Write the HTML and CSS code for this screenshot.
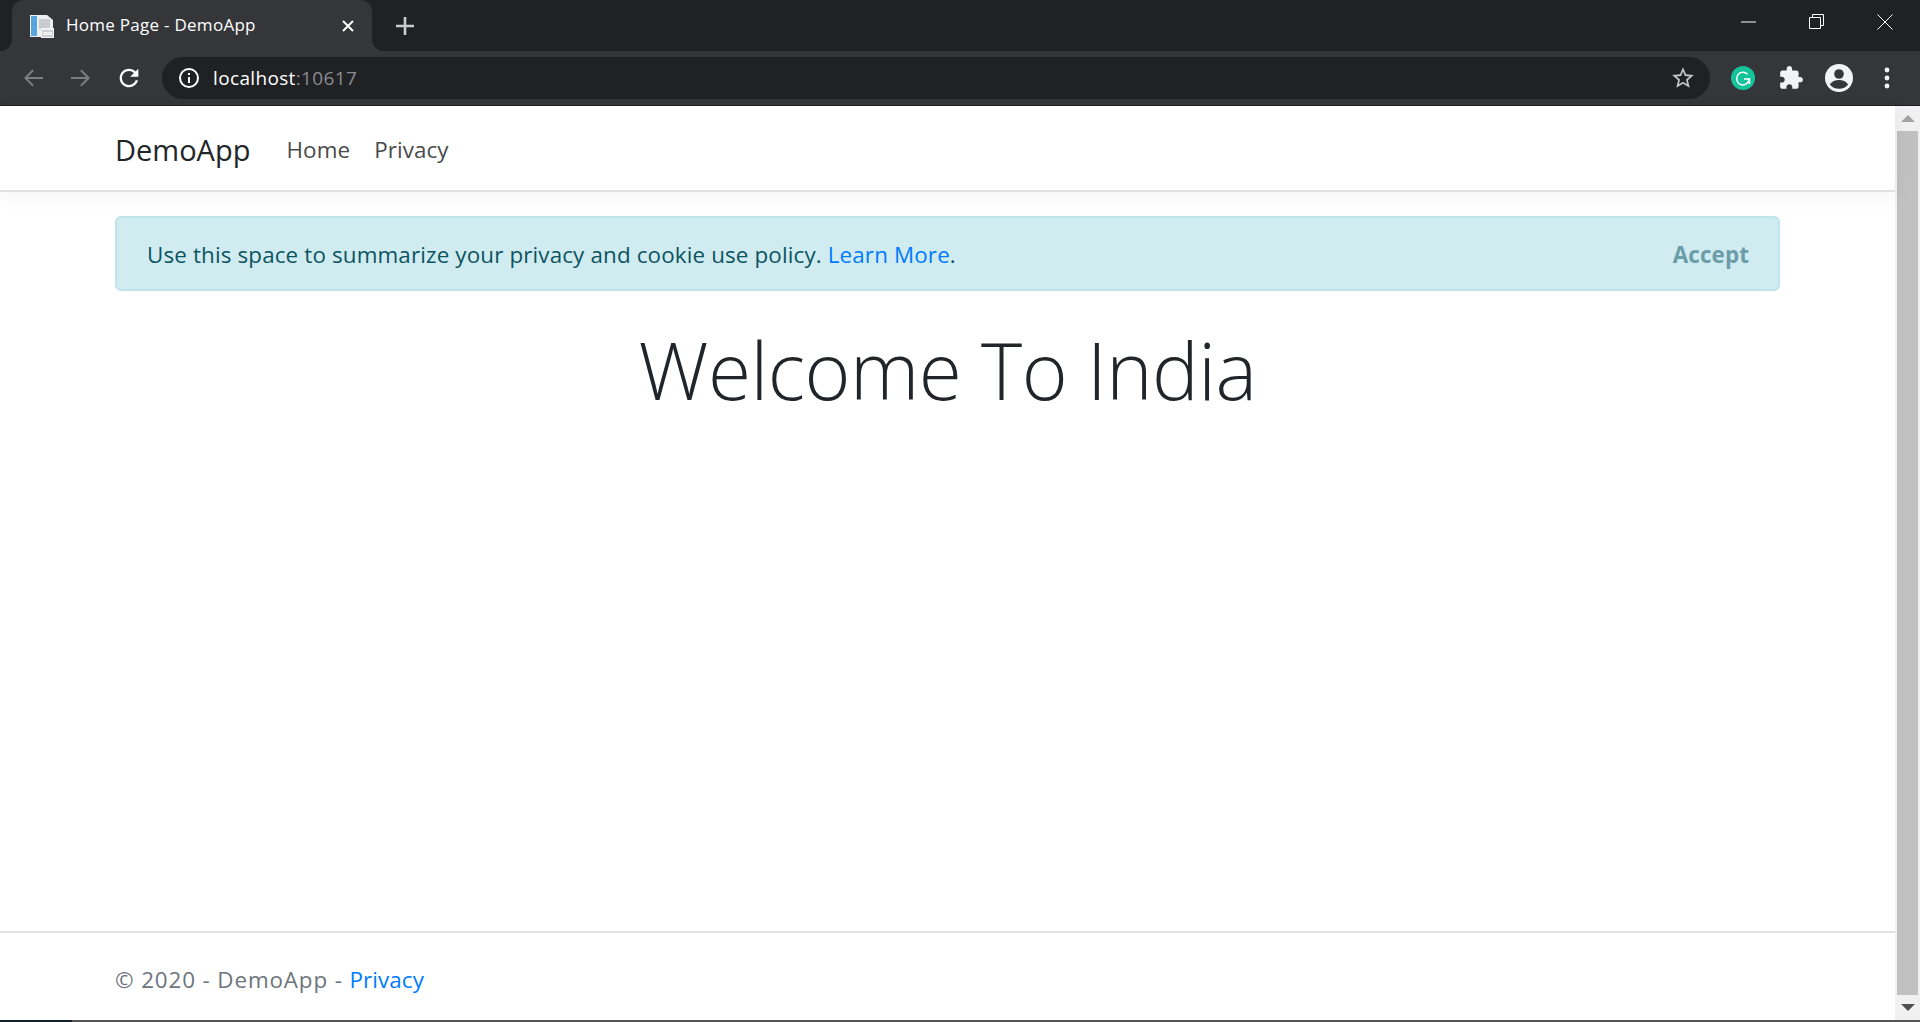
FILE: index.html
```html
<!DOCTYPE html>
<html lang="en">
<head>
<meta charset="utf-8">
<title>Home Page - DemoApp</title>
<link rel="stylesheet" href="styles.css">
</head>
<body>
<div class="browser">
  <div class="tabstrip">
    <div class="strip-left"></div>
    <div class="tab">
      <svg class="favicon" width="24" height="24" viewBox="0 0 24 24">
        <path d="M0 1h17l6 5v17H0z" fill="#eceef0"/>
        <rect x="1" y="2" width="6" height="20" fill="#5aa5de"/>
        <rect x="9" y="5" width="11" height="10" fill="#c8ccd0"/>
        <rect x="11" y="14" width="13" height="10" fill="#f2f3f4"/>
        <rect x="12" y="16" width="11" height="7" fill="#ccd1d6"/>
        <rect x="13" y="18" width="9" height="3" fill="#eef0f2"/>
      </svg>
      <span class="tab-title">Home Page - DemoApp</span>
      <svg class="tab-close" width="12" height="12" viewBox="0 0 12 12"><path d="M1 1l10 10M11 1L1 11" stroke="#fff" stroke-width="2"/></svg>
    </div>
    <div class="strip-right">
      <svg class="new-tab" width="18" height="18" viewBox="0 0 18 18"><path d="M9 0v18M0 9h18" stroke="#c9ccd1" stroke-width="2.6"/></svg>
      <div class="win-controls">
        <div class="win-btn"><svg width="16" height="16" viewBox="0 0 16 16"><path d="M0 8h15" stroke="#fff" stroke-width="1"/></svg></div>
        <div class="win-btn"><svg width="16" height="16" viewBox="0 0 16 16"><path d="M3.5 3.5V.5h11v11h-3M.5 3.5h11v11H.5z" fill="none" stroke="#fff"/></svg></div>
        <div class="win-btn"><svg width="16" height="16" viewBox="0 0 16 16"><path d="M.5.5l15 15M15.500.5l-15 15" stroke="#fff" fill="none"/></svg></div>
      </div>
    </div>
  </div>
  <div class="toolbar">
    <div class="tool-btn"><svg width="24" height="24" viewBox="0 0 24 24"><path fill="#7d7e82" d="M22 11H6.800l6-6L11.400 3.600 3 12l8.400 8.400 1.400-1.400-6-6H22z"/></svg></div>
    <div class="tool-btn"><svg width="24" height="24" viewBox="0 0 24 24"><path fill="#7d7e82" d="M2 11h15.200l-6-6 1.400-1.400L21 12l-8.400 8.400-1.400-1.400 6-6H2z"/></svg></div>
    <div class="tool-btn"><svg width="28" height="28" viewBox="0 0 24 24"><path fill="#fff" d="M17.650 6.350C16.200 4.900 14.210 4 12 4c-4.420 0-7.990 3.580-7.990 8s3.570 8 7.990 8c3.730 0 6.840-2.550 7.730-6h-2.080c-.82 2.330-3.040 4-5.650 4-3.310 0-6-2.690-6-6s2.690-6 6-6c1.660 0 3.140.69 4.220 1.780L13 11h7V4l-2.350 2.350z"/></svg></div>
    <div class="omnibox">
      <svg class="info" width="22" height="22" viewBox="0 0 22 22"><circle cx="11" cy="11" r="9" fill="none" stroke="#fff" stroke-width="2"/><rect x="10" y="10" width="2" height="6" fill="#fff"/><rect x="10" y="6" width="2" height="2" fill="#fff"/></svg>
      <span class="url"><span class="url-host">localhost</span>:10617</span>
      <svg class="star" width="26" height="26" viewBox="0 0 24 24"><path fill="#c4c5c7" d="M22 9.240l-7.190-.62L12 2 9.190 8.630 2 9.240l5.460 4.730L5.820 21 12 17.270 18.180 21l-1.630-7.030L22 9.240zM12 15.400l-3.760 2.270 1-4.280-3.320-2.880 4.380-.38L12 6.100l1.710 4.040 4.380.38-3.320 2.880 1 4.280L12 15.400z"/></svg>
    </div>
    <div class="tool-group">
      <div class="tool-btn"><svg width="24" height="24" viewBox="0 0 24 24"><circle cx="12" cy="12" r="12" fill="#15c39a"/><path d="M16.500 8.200A6.300 6.300 0 1 0 18.300 12.800" fill="none" stroke="#fff" stroke-width="1.500"/><path d="M13 13h5.500v5" fill="none" stroke="#fff" stroke-width="1.500"/></svg></div>
      <div class="tool-btn"><svg width="26" height="26" viewBox="0 0 24 24"><path fill="#f1f3f4" d="M20.500 11H19V7c0-1.100-.9-2-2-2h-4V3.500C13 2.120 11.880 1 10.500 1S8 2.120 8 3.500V5H4c-1.100 0-1.990.9-1.990 2v3.800H3.500c1.490 0 2.700 1.210 2.700 2.700s-1.210 2.700-2.700 2.700H2V20c0 1.100.9 2 2 2h3.800v-1.500c0-1.490 1.210-2.700 2.700-2.700 1.490 0 2.700 1.210 2.700 2.700V22H17c1.100 0 2-.9 2-2v-4h1.500c1.380 0 2.500-1.120 2.500-2.500S21.880 11 20.500 11z"/></svg></div>
      <div class="tool-btn"><svg width="28" height="28" viewBox="0 0 28 28"><circle cx="14" cy="14" r="14" fill="#f1f3f4"/><circle cx="14" cy="10" r="4.800" fill="#35363a"/><path d="M4.800 20.500c2-3.200 5.500-4.500 9.200-4.500s7.200 1.300 9.200 4.500c-2 2.800-5.400 4.300-9.200 4.300s-7.200-1.500-9.200-4.300z" fill="#35363a"/></svg></div>
      <div class="tool-btn"><svg width="6" height="22" viewBox="0 0 6 22"><circle cx="3" cy="3" r="2.400" fill="#f1f3f4"/><circle cx="3" cy="11" r="2.400" fill="#f1f3f4"/><circle cx="3" cy="19" r="2.400" fill="#f1f3f4"/></svg></div>
    </div>
  </div>
  <div class="viewport">
    <div class="page">
      <header class="navbar">
        <a class="brand">DemoApp</a>
        <nav class="nav-links"><a class="nav-link">Home</a><a class="nav-link">Privacy</a></nav>
      </header>
      <main class="content">
        <div class="alert">
          <span class="alert-text">Use this space to summarize your privacy and cookie use policy. <a class="link">Learn More</a>.</span>
          <button class="accept">Accept</button>
        </div>
        <h1 class="welcome">Welcome To India</h1>
      </main>
      <footer class="footer">© 2020 - DemoApp - <a class="link footer-link">Privacy</a></footer>
    </div>
    <div class="scrollbar">
      <div class="scroll-btn"><svg width="14" height="7" viewBox="0 0 14 7"><path d="M7 0l7 7H0z" fill="#a3a3a3"/></svg></div>
      <div class="scroll-thumb"></div>
      <div class="scroll-btn"><svg width="14" height="7" viewBox="0 0 14 7"><path d="M7 7l7-7H0z" fill="#505050"/></svg></div>
    </div>
  </div>
  <div class="taskbar"><div class="taskbar-start"></div></div>
</div>
</body>
</html>
```

FILE: styles.css
```css
* { box-sizing: border-box; }
html, body { margin: 0; height: 100%; overflow: hidden; }
body { font-family: "Open Sans", "Noto Sans", "Liberation Sans", sans-serif; background: #fff; }
.browser { display: flex; flex-direction: column; height: 1022px; }

.tabstrip { display: flex; height: 51px; background: linear-gradient(#202124 50%, #35363a 50%); }
.strip-left { width: 12px; background: #202124; border-bottom-right-radius: 12px; }
.tab { width: 360px; background: #35363a; border-radius: 12px 12px 0 0; display: flex; align-items: center; padding: 0 18px 2px; }
.favicon { margin-right: 12px; margin-top: 2px; }
.tab-title { color: #fff; font-size: 17px; flex: 1; letter-spacing: 0.27px; white-space: nowrap; }
.tab-close { flex: none; margin-top: 2px; }
.strip-right { flex: 1; background: #202124; border-bottom-left-radius: 12px; display: flex; align-items: center; padding-left: 24px; }
.new-tab { margin-top: 0; }
.win-controls { margin-left: auto; display: flex; padding-right: 1px; margin-top: -8px; }
.win-btn { width: 68px; height: 30px; display: flex; align-items: center; justify-content: center; }

.toolbar { display: flex; align-items: center; height: 54px; background: #35363a; padding: 0 9px; }
.tool-btn { width: 48px; height: 48px; display: flex; align-items: center; justify-content: center; flex: none; }
.tool-group { display: flex; margin-left: 9px; }
.omnibox { flex: 1; height: 42px; margin-left: 9px; background: #202124; border-radius: 21px; display: flex; align-items: center; padding: 0 14px 0 16px; }
.info { flex: none; }
.url { margin-left: 13px; font-size: 19px; color: #8b8c8f; letter-spacing: 0.35px; }
.url-host { color: #fff; }
.star { margin-left: auto; }

.viewport { flex: 1; display: flex; min-height: 0; border-top: 1px solid #1e1f22; }
.page { flex: 1; display: flex; flex-direction: column; min-width: 0; }

.navbar { height: 86px; flex: none; display: flex; align-items: center; padding: 2px 115px 0; border-bottom: 2px solid #dee2e6; box-shadow: 0 4px 20px rgba(0,0,0,.05); position: relative; }
.brand { font-size: 29px; color: #212529; }
.nav-links { display: flex; margin-left: 24px; }
.nav-link { font-size: 22.4px; color: #4a4a4a; padding: 0 12px; letter-spacing: 0.1px; }

.content { flex: 1; padding: 24px 115px 0; }
.alert { height: 75px; display: flex; align-items: center; justify-content: space-between; background: #d1ecf1; border: 2px solid #bee5eb; border-radius: 6px; padding: 2px 30px 0; color: #0c5460; font-size: 22.4px; letter-spacing: 0.14px; }
.link { color: #007bff; }
.accept { border: 0; background: none; font-family: inherit; font-size: 22.4px; font-weight: 700; color: #6a9da8; letter-spacing: 0.1px; padding: 0; margin-right: -1px; }
.welcome { margin: 32px 0 0; text-align: center; font-weight: 300; font-size: 78.4px; line-height: 1.2; color: #212529; letter-spacing: -0.5px; }

.footer { height: 89px; flex: none; border-top: 2px solid #dee2e6; display: flex; align-items: center; padding: 5px 115px 0; font-size: 22.4px; color: #6c757d; letter-spacing: 0.87px; white-space: pre; }
.footer-link { letter-spacing: 0.1px; }

.scrollbar { width: 25px; flex: none; background: #f1f1f1; display: flex; flex-direction: column; }
.scroll-btn { height: 25px; display: flex; align-items: center; justify-content: center; flex: none; }
.scroll-thumb { flex: 1; background: #c1c1c1; margin: 0 2px; }

.taskbar { height: 2px; flex: none; background: #555; }
.taskbar-start { width: 72px; height: 2px; background: #10212b; }
```
